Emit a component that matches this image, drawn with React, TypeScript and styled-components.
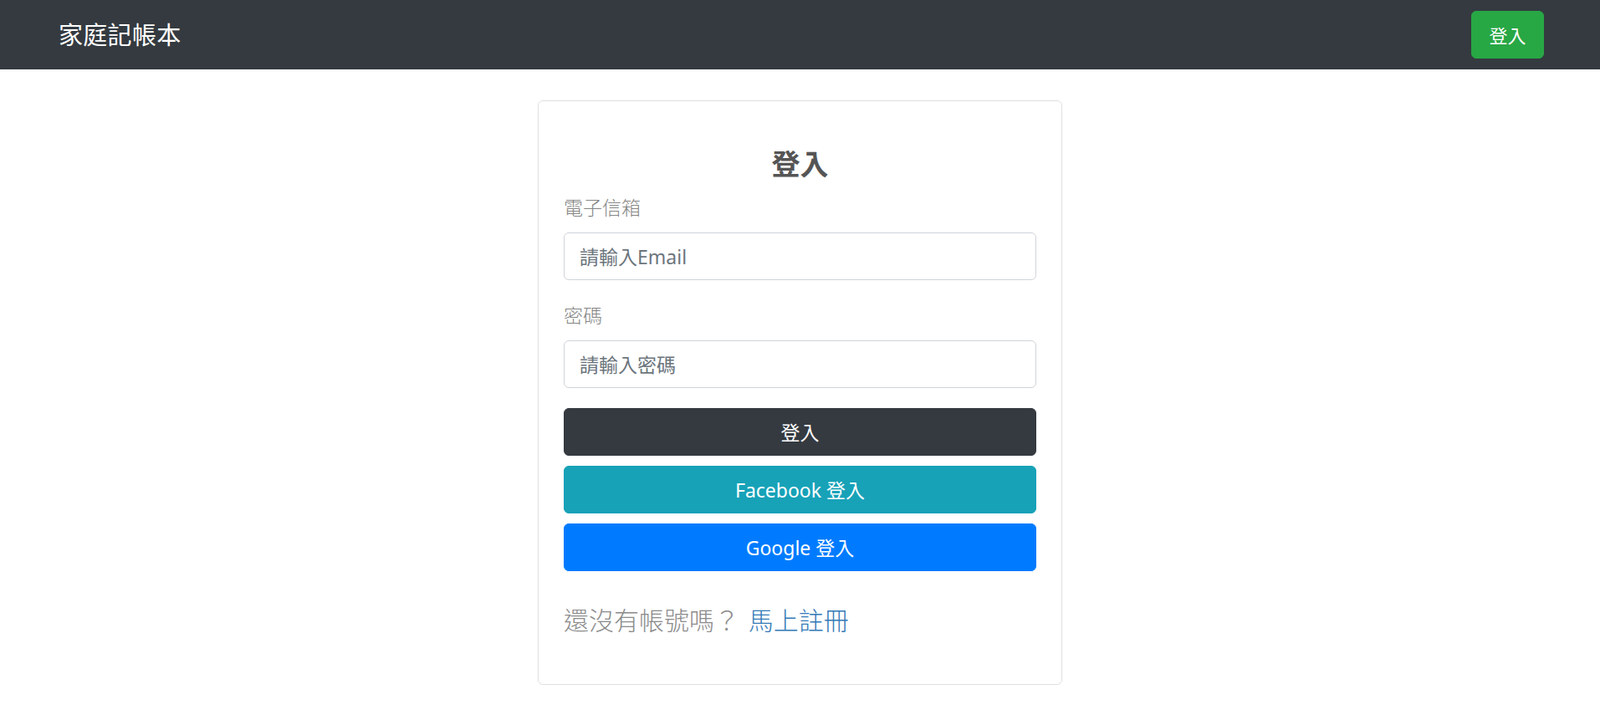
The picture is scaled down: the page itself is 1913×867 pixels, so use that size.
import styled, { createGlobalStyle } from 'styled-components';

const GlobalStyle = createGlobalStyle`
  * {
    box-sizing: border-box;
  }

  body {
    margin: 0;
    background: #fff;
    font-family: "Noto Sans", "Noto Sans CJK TC", sans-serif;
    font-size: 24px;
    line-height: 36px;
    color: #212529;
  }
`;

const App = () => {
  return (
    <>
      <GlobalStyle />
      <Navbar>
        <Brand>家庭記帳本</Brand>
        <NavButton>登入</NavButton>
      </Navbar>

      <Card>
        <Title>登入</Title>

        <FormGroup>
          <Label htmlFor="email">電子信箱</Label>
          <Input id="email" type="email" placeholder="請輸入Email" />
        </FormGroup>

        <FormGroup>
          <Label htmlFor="password">密碼</Label>
          <Input id="password" type="password" placeholder="請輸入密碼" />
        </FormGroup>

        <Actions>
          <Button variant="dark">登入</Button>
          <Button variant="info">Facebook 登入</Button>
          <Button variant="primary">Google 登入</Button>
        </Actions>

        <Lead>
          還沒有帳號嗎？ <Link href="#">馬上註冊</Link>
        </Lead>
      </Card>
    </>
  );
};

const colors = {
  dark: '#343a40',
  info: '#17a2b8',
  primary: '#007bff',
};

const Navbar = styled.nav`
  height: 83px;
  background: #343a40;
  display: flex;
  align-items: center;
  justify-content: space-between;
  padding: 0 67px 0 70px;
`;

const Brand = styled.a`
  font-size: 29px;
  line-height: 44px;
  color: #fff;
  letter-spacing: 0.3px;
`;

const NavButton = styled.button`
  font-family: inherit;
  font-size: 22px;
  line-height: 34px;
  color: #fff;
  background: #28a745;
  border: 1.5px solid #28a745;
  border-radius: 6px;
  width: 87px;
  height: 57px;
  padding: 0;
  cursor: pointer;
`;

const Card = styled.div`
  width: 627px;
  margin: 37px auto 0;
  border: 1.5px solid rgba(0, 0, 0, 0.125);
  border-radius: 6px;
  padding: 30px;
`;

const Title = styled.h4`
  margin: 24px 0 12px;
  text-align: center;
  font-size: 34px;
  line-height: 43px;
  font-weight: 700;
  color: #555;
`;

const FormGroup = styled.div`
  margin-bottom: 24px;
`;

const Label = styled.label`
  display: block;
  margin-bottom: 12px;
  font-size: 23px;
  line-height: 36px;
  color: #858585;
  font-weight: 300;
`;

const Input = styled.input`
  display: block;
  width: 100%;
  height: 57px;
  padding: 9px 18px;
  font-family: inherit;
  font-size: 23px;
  color: #495057;
  border: 1.5px solid #ced4da;
  border-radius: 6px;
  outline: none;

  &::placeholder {
    color: #6c757d;
  }
`;

const Actions = styled.div`
  display: flex;
  flex-direction: column;
  gap: 12px;
`;

const Button = styled.button<{ variant: keyof typeof colors }>`
  width: 100%;
  height: 57px;
  font-family: inherit;
  font-size: 23px;
  line-height: 36px;
  color: #fff;
  background: ${({ variant }) => colors[variant]};
  border: 1.5px solid ${({ variant }) => colors[variant]};
  border-radius: 6px;
  cursor: pointer;
`;

const Lead = styled.p`
  margin: 36px 0 24px;
  font-size: 30px;
  line-height: 45px;
  font-weight: 300;
  color: #8a8a8a;
`;

const Link = styled.a`
  margin-left: 3px;
  color: #337ab7;
  text-decoration: none;
`;

export default App;
